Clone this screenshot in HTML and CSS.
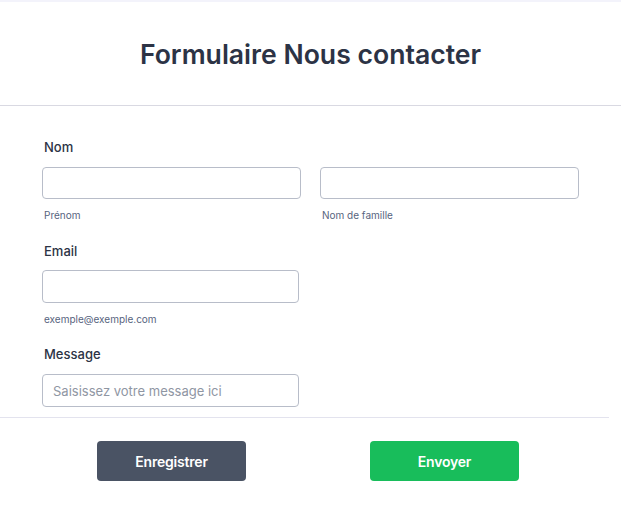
FILE: index.html
```html
<!DOCTYPE html>
<html lang="fr">
<head>
<meta charset="utf-8">
<title>Formulaire Nous contacter</title>
<link rel="stylesheet" href="styles.css">
</head>
<body>
<div class="page">
  <header class="header">
    <h1 class="title">Formulaire Nous contacter</h1>
  </header>
  <main class="content">
    <div class="field">
      <div class="label">Nom</div>
      <div class="row">
        <div class="col">
          <input class="input" type="text">
          <div class="sublabel">Prénom</div>
        </div>
        <div class="col">
          <input class="input" type="text">
          <div class="sublabel">Nom de famille</div>
        </div>
      </div>
    </div>
    <div class="field field-email">
      <div class="label">Email</div>
      <div class="col single">
        <input class="input tall" type="email">
        <div class="sublabel">exemple@exemple.com</div>
      </div>
    </div>
    <div class="field">
      <div class="label">Message</div>
      <div class="col single">
        <input class="input tall message" type="text" placeholder="Saisissez votre message ici">
      </div>
    </div>
  </main>
  <footer class="footer">
    <button class="btn btn-save" type="button">Enregistrer</button>
    <button class="btn btn-send" type="button">Envoyer</button>
  </footer>
</div>
</body>
</html>
```
FILE: styles.css
```css
html, body {
  margin: 0;
  padding: 0;
  background: #ffffff;
}
body {
  font-family: Inter, "Noto Sans", sans-serif;
  color: #2c3345;
}
.page {
  height: 508px;
  display: flex;
  flex-direction: column;
  border-top: 2px solid #f3f3fb;
  box-sizing: border-box;
  overflow: hidden;
}
.header {
  height: 103px;
  border-bottom: 1px solid #d9d9e2;
  display: flex;
  align-items: center;
  justify-content: center;
  flex-shrink: 0;
}
.title {
  margin: 0;
  font-size: 26.6px;
  font-weight: 600;
  color: #2c3345;
}
.content {
  flex: 1;
  overflow: hidden;
  padding: 31px 0 0 42px;
}
.field {
  margin-bottom: 20px;
}
.field-email {
  margin-bottom: 19px;
}
.field-email .label {
  margin-bottom: 9px;
}
.label {
  font-size: 13px;
  font-weight: 500;
  line-height: 20px;
  padding-left: 2px;
  margin-bottom: 10px;
}
.row {
  display: flex;
  gap: 19px;
}
.col {
  width: 259px;
  display: flex;
  flex-direction: column;
}
.col.single {
  width: 257px;
}
.input {
  box-sizing: border-box;
  width: 100%;
  height: 32px;
  margin: 0;
  border: 1px solid #b8bdc9;
  border-radius: 4px;
  background: #fff;
  font-family: Inter, "Noto Sans", sans-serif;
  font-size: 14px;
  padding: 0 10px;
  outline: none;
  color: #2c3345;
}
.input.tall {
  height: 33px;
}
.message {
  font-size: 13px;
  padding-left: 10px;
}
.message::placeholder {
  color: #8f96a3;
}
.sublabel {
  font-size: 10px;
  line-height: 12px;
  color: #57647e;
  margin-top: 10px;
  padding-left: 2px;
}
.footer {
  width: 609px;
  height: 91px;
  flex-shrink: 0;
  border-top: 1px solid #e3e3ee;
  display: flex;
  align-items: flex-start;
  gap: 124px;
  padding: 23px 0 0 97px;
  box-sizing: border-box;
  background: #fff;
}
.btn {
  width: 149px;
  height: 40px;
  border: none;
  border-radius: 4px;
  color: #ffffff;
  font-family: Inter, "Noto Sans", sans-serif;
  font-size: 14px;
  font-weight: 600;
  letter-spacing: -0.2px;
  cursor: pointer;
}
.btn-save {
  background: #4a5364;
}
.btn-send {
  background: #18bd5b;
}
```
